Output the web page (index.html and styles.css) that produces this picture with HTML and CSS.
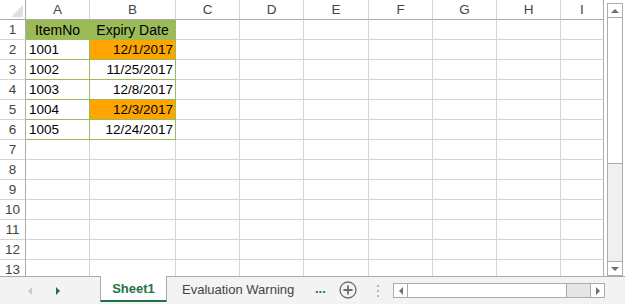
FILE: index.html
```html
<!DOCTYPE html>
<html lang="en">
<head>
    <meta charset="UTF-8">
    <title>Sheet1</title>
    <link rel="stylesheet" href="styles.css">
</head>
<body>
    <div class="sheet">
        <div class="grid">
            <div class="corner"><span class="corner-tri"></span></div>
            <div class="colhead">A</div>
            <div class="colhead">B</div>
            <div class="colhead">C</div>
            <div class="colhead">D</div>
            <div class="colhead">E</div>
            <div class="colhead">F</div>
            <div class="colhead">G</div>
            <div class="colhead">H</div>
            <div class="colhead last">I</div>

            <div class="rowhead">1</div>
            <div class="cell tbl head">ItemNo</div>
            <div class="cell tbl head">Expiry Date</div>
            <div class="cell"></div><div class="cell"></div><div class="cell"></div><div class="cell"></div><div class="cell"></div><div class="cell"></div><div class="cell last"></div>

            <div class="rowhead">2</div>
            <div class="cell tbl">1001</div>
            <div class="cell tbl num warn">12/1/2017</div>
            <div class="cell"></div><div class="cell"></div><div class="cell"></div><div class="cell"></div><div class="cell"></div><div class="cell"></div><div class="cell last"></div>

            <div class="rowhead">3</div>
            <div class="cell tbl">1002</div>
            <div class="cell tbl num">11/25/2017</div>
            <div class="cell"></div><div class="cell"></div><div class="cell"></div><div class="cell"></div><div class="cell"></div><div class="cell"></div><div class="cell last"></div>

            <div class="rowhead">4</div>
            <div class="cell tbl">1003</div>
            <div class="cell tbl num">12/8/2017</div>
            <div class="cell"></div><div class="cell"></div><div class="cell"></div><div class="cell"></div><div class="cell"></div><div class="cell"></div><div class="cell last"></div>

            <div class="rowhead">5</div>
            <div class="cell tbl">1004</div>
            <div class="cell tbl num warn">12/3/2017</div>
            <div class="cell"></div><div class="cell"></div><div class="cell"></div><div class="cell"></div><div class="cell"></div><div class="cell"></div><div class="cell last"></div>

            <div class="rowhead">6</div>
            <div class="cell tbl">1005</div>
            <div class="cell tbl num">12/24/2017</div>
            <div class="cell"></div><div class="cell"></div><div class="cell"></div><div class="cell"></div><div class="cell"></div><div class="cell"></div><div class="cell last"></div>

            <div class="rowhead">7</div>
            <div class="cell"></div><div class="cell"></div><div class="cell"></div><div class="cell"></div><div class="cell"></div><div class="cell"></div><div class="cell"></div><div class="cell"></div><div class="cell last"></div>
            <div class="rowhead">8</div>
            <div class="cell"></div><div class="cell"></div><div class="cell"></div><div class="cell"></div><div class="cell"></div><div class="cell"></div><div class="cell"></div><div class="cell"></div><div class="cell last"></div>
            <div class="rowhead">9</div>
            <div class="cell"></div><div class="cell"></div><div class="cell"></div><div class="cell"></div><div class="cell"></div><div class="cell"></div><div class="cell"></div><div class="cell"></div><div class="cell last"></div>
            <div class="rowhead">10</div>
            <div class="cell"></div><div class="cell"></div><div class="cell"></div><div class="cell"></div><div class="cell"></div><div class="cell"></div><div class="cell"></div><div class="cell"></div><div class="cell last"></div>
            <div class="rowhead">11</div>
            <div class="cell"></div><div class="cell"></div><div class="cell"></div><div class="cell"></div><div class="cell"></div><div class="cell"></div><div class="cell"></div><div class="cell"></div><div class="cell last"></div>
            <div class="rowhead">12</div>
            <div class="cell"></div><div class="cell"></div><div class="cell"></div><div class="cell"></div><div class="cell"></div><div class="cell"></div><div class="cell"></div><div class="cell"></div><div class="cell last"></div>
            <div class="rowhead">13</div>
            <div class="cell"></div><div class="cell"></div><div class="cell"></div><div class="cell"></div><div class="cell"></div><div class="cell"></div><div class="cell"></div><div class="cell"></div><div class="cell last"></div>
        </div>

        <div class="vscroll">
            <div class="vtrack">
                <div class="sbtn"><span class="tri-up"></span></div>
                <div class="vthumb"></div>
                <div class="vfill"></div>
                <div class="sbtn down"><span class="tri-down"></span></div>
            </div>
        </div>
    </div>

    <div class="tabbar">
        <div class="tabnav">
            <span class="tri-left faded"></span>
            <span class="tri-right green"></span>
        </div>
        <div class="tab active">Sheet1</div>
        <div class="tab">Evaluation Warning</div>
        <div class="more">...</div>
        <div class="addsheet">
            <svg width="18" height="18" viewBox="0 0 18 18">
                <circle cx="9" cy="9" r="8" fill="none" stroke="#6d6d6d" stroke-width="1.3"/>
                <path d="M9 4.5v9M4.5 9h9" stroke="#6d6d6d" stroke-width="1.8"/>
            </svg>
        </div>
        <div class="splitter">
            <span></span><span></span><span></span>
        </div>
        <div class="hscroll">
            <div class="sbtn left"><span class="tri-left"></span></div>
            <div class="hthumb"></div>
            <div class="hfill"></div>
            <div class="sbtn right"><span class="tri-right"></span></div>
        </div>
    </div>
</body>
</html>
```

FILE: styles.css
```css
body {
    margin: 0;
    width: 625px;
    height: 304px;
    overflow: hidden;
    background-color: #fff;
    font-family: "Liberation Sans", Arial, sans-serif;
    color: #000;
}

.sheet {
    display: flex;
    height: 276px;
    overflow: hidden;
}

.grid {
    display: grid;
    grid-template-columns: 26px 64px 86px 64px 64px 65px 64px 64px 64px 43px;
    grid-auto-rows: 20px;
    width: 604px;
    flex: none;
}

.grid > div {
    box-sizing: border-box;
}

.corner {
    border-right: 1px solid #ababab;
    border-bottom: 1px solid #ababab;
    position: relative;
}

.corner-tri {
    position: absolute;
    right: 2px;
    bottom: 2px;
    width: 0;
    height: 0;
    border-left: 12px solid transparent;
    border-bottom: 12px solid #dfdfdf;
}

.colhead {
    border-right: 1px solid #d4d4d4;
    border-bottom: 1px solid #ababab;
    text-align: center;
    font-size: 13.5px;
    line-height: 19px;
    color: #444;
}

.colhead.last {
    border-right: 1px solid #ababab;
}

.rowhead {
    border-right: 1px solid #ababab;
    border-bottom: 1px solid #d4d4d4;
    text-align: center;
    font-size: 13.5px;
    line-height: 20px;
    color: #444;
}

.cell {
    border-right: 1px solid #d4d4d4;
    border-bottom: 1px solid #d4d4d4;
    font-size: 13.5px;
    line-height: 20px;
    padding: 0 3px;
    white-space: nowrap;
}

.cell.last {
    border-right: 1px solid #ababab;
}

.cell.tbl {
    border-right-color: #9bbb59;
    border-bottom-color: #9bbb59;
}

.cell.head {
    background-color: #9bbb59;
    text-align: center;
    font-size: 14px;
}

.cell.num {
    text-align: right;
    padding-right: 2px;
}

.cell.warn {
    background-color: #ffa500;
}

/* vertical scrollbar */
.vscroll {
    flex: 1;
    padding: 3px 3px 0 3px;
}

.vtrack {
    box-sizing: border-box;
    width: 16px;
    height: 273px;
    border: 1px solid #ababab;
    background-color: #f0f0f0;
    display: flex;
    flex-direction: column;
}

.sbtn {
    display: flex;
    align-items: center;
    justify-content: center;
    background-color: #fff;
    height: 13px;
    flex: none;
}

.vthumb {
    height: 147px;
    background-color: #fff;
    border-top: 1px solid #ababab;
    border-bottom: 1px solid #ababab;
    box-sizing: border-box;
}

.vfill {
    flex: 1;
}

.sbtn.down {
    border-top: 1px solid #ababab;
}

.tri-up, .tri-down, .tri-left, .tri-right {
    width: 0;
    height: 0;
    display: inline-block;
}

.tri-up {
    border-left: 4px solid transparent;
    border-right: 4px solid transparent;
    border-bottom: 4px solid #707070;
}

.tri-down {
    border-left: 4px solid transparent;
    border-right: 4px solid transparent;
    border-top: 4px solid #707070;
}

.tri-left {
    border-top: 4px solid transparent;
    border-bottom: 4px solid transparent;
    border-right: 4px solid #707070;
}

.tri-right {
    border-top: 4px solid transparent;
    border-bottom: 4px solid transparent;
    border-left: 4px solid #707070;
}

/* sheet tabs */
.tabbar {
    display: flex;
    height: 28px;
    box-sizing: border-box;
    border-top: 1px solid #ababab;
    background-color: #f3f3f3;
    font-size: 13px;
}

.tabnav {
    width: 100px;
    flex: none;
    display: flex;
    align-items: center;
    padding-left: 28px;
    box-sizing: border-box;
    gap: 24px;
}

.tri-left.faded {
    border-right-color: #c8c8c8;
}

.tri-right.green {
    border-left-color: #217346;
}

.tab {
    box-sizing: border-box;
    height: 26px;
    padding: 0 15px;
    line-height: 25px;
    color: #444;
    white-space: nowrap;
    flex: none;
}

.tab.active {
    width: 67px;
    margin-top: -1px;
    padding: 0;
    text-align: center;
    background-color: #fff;
    border-left: 1px solid #ababab;
    border-right: 1px solid #ababab;
    border-bottom: 2px solid #217346;
    font-weight: bold;
    color: #217346;
    line-height: 26px;
}

.tab + .tab {
    width: 142px;
}

.more {
    box-sizing: border-box;
    width: 30px;
    padding-left: 6px;
    color: #217346;
    font-weight: bold;
    line-height: 24px;
    flex: none;
}

.addsheet {
    width: 24px;
    padding-top: 4px;
    flex: none;
}

.splitter {
    width: 16px;
    padding-left: 14px;
    display: flex;
    flex-direction: column;
    justify-content: center;
    gap: 3px;
    flex: none;
}

.splitter span {
    width: 2px;
    height: 2px;
    background-color: #b8b8b8;
}

.hscroll {
    display: flex;
    box-sizing: border-box;
    width: 212px;
    height: 15px;
    margin-top: 6px;
    border: 1px solid #ababab;
    background-color: #e6e6e6;
}

.hscroll .sbtn {
    width: 13px;
    height: 13px;
}

.hscroll .sbtn.left {
    border-right: 1px solid #ababab;
}

.hthumb {
    width: 158px;
    background-color: #fff;
    border-right: 1px solid #ababab;
}

.hfill {
    flex: 1;
}

.hscroll .sbtn.right {
    border-left: 1px solid #ababab;
}
```
